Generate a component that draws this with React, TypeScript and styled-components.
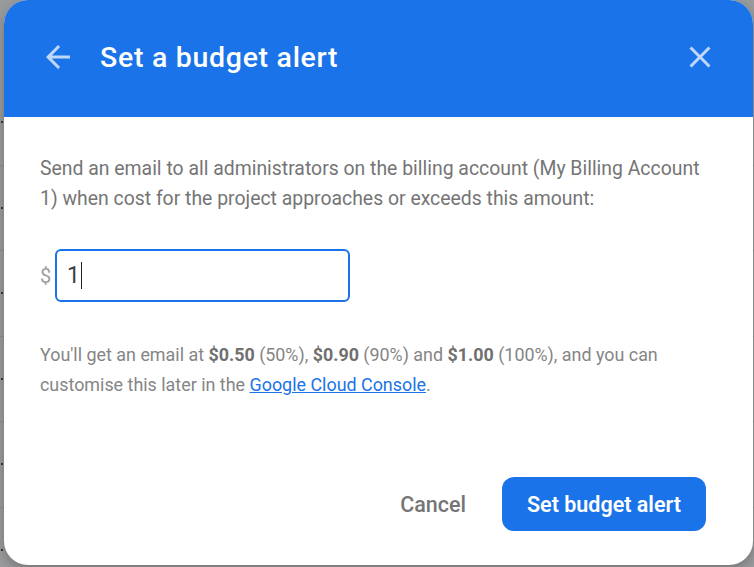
import React from 'react';
import styled, { createGlobalStyle } from 'styled-components';

const GlobalStyle = createGlobalStyle`
  html, body {
    margin: 0;
    padding: 0;
    background: #9a9b9d;
    font-family: Roboto, 'Liberation Sans', Arial, sans-serif;
  }
`;

const Page = styled.div`
  position: relative;
  width: 754px;
  height: 567px;
  overflow: hidden;
  background: #9a9b9d;
`;

const BackRows = styled.div`
  display: flex;
  flex-direction: column;
  padding-top: 80px;
`;

const BackRow = styled.div`
  height: 85.5px;
  box-sizing: border-box;
  border-bottom: 1px solid #8e8f91;
  display: flex;
  align-items: center;
  padding-left: 1px;
  .dot {
    width: 2px;
    height: 2px;
    background: #2f3a44;
  }
`;

const Dialog = styled.div`
  position: absolute;
  left: 4px;
  top: 0;
  width: 749px;
  height: 565px;
  border-radius: 24px;
  overflow: hidden;
  background: #fff;
  display: flex;
  flex-direction: column;
  box-shadow: 0 4px 12px rgba(0, 0, 0, 0.25);
`;

const Header = styled.div`
  height: 117px;
  box-sizing: border-box;
  flex-shrink: 0;
  background: #1a73e8;
  display: flex;
  align-items: center;
  padding: 0 35px 3px 36px;
`;

const IconButton = styled.button`
  border: 0;
  background: transparent;
  padding: 0;
  width: 36px;
  height: 36px;
  display: flex;
  align-items: center;
  justify-content: center;
  cursor: pointer;
  svg {
    fill: rgba(255, 255, 255, 0.72);
  }
`;

const Title = styled.h1`
  margin: 0 0 0 24px;
  flex: 1;
  color: #fff;
  font-size: 28.5px;
  font-weight: 500;
  letter-spacing: 0.7px;
`;

const Body = styled.div`
  flex: 1;
  display: flex;
  flex-direction: column;
  padding: 37px 36px 34px;
`;

const Lead = styled.p`
  margin: 0;
  font-size: 19.4px;
  line-height: 30px;
  color: #757575;
`;

const AmountRow = styled.div`
  display: flex;
  align-items: center;
  margin-top: 35px;
  gap: 4px;
`;

const Currency = styled.span`
  font-size: 20px;
  color: #9e9e9e;
  width: 11px;
`;

const AmountField = styled.div`
  width: 295px;
  height: 53px;
  box-sizing: border-box;
  border: 2px solid #1a73e8;
  border-radius: 6px;
  display: flex;
  align-items: center;
  padding-left: 10px;
  font-size: 23px;
  color: #3c4043;
`;

const Caret = styled.span`
  display: inline-block;
  width: 1px;
  height: 27px;
  margin-left: 1px;
  background: #202124;
`;

const Note = styled.p`
  margin: 38px 0 0;
  font-size: 17.9px;
  line-height: 30px;
  color: #858585;
  b {
    font-weight: 700;
    color: #707070;
  }
  a {
    color: #1a73e8;
    text-decoration: underline;
  }
`;

const Footer = styled.div`
  margin-top: auto;
  display: flex;
  justify-content: flex-end;
  align-items: center;
  gap: 20px;
  padding-right: 11px;
`;

const Button = styled.button<{ $primary?: boolean }>`
  font-family: Roboto, 'Liberation Sans', Arial, sans-serif;
  font-size: 21.5px;
  font-weight: ${(p) => (p.$primary ? 600 : 500)};
  height: 54px;
  border: 0;
  border-radius: 12px;
  padding: 0 ${(p) => (p.$primary ? '25px' : '16px')};
  background: ${(p) => (p.$primary ? '#1a73e8' : 'transparent')};
  color: ${(p) => (p.$primary ? '#fff' : '#757575')};
  cursor: pointer;
`;

const ArrowBack = () => (
  <svg width='36' height='36' viewBox='0 0 24 24'>
    <path d='M20 11H7.83l5.59-5.59L12 4l-8 8 8 8 1.41-1.41L7.83 13H20v-2z' />
  </svg>
);

const CloseIcon = () => (
  <svg width='36' height='36' viewBox='0 0 24 24'>
    <path d='M19 6.41L17.59 5 12 10.59 6.41 5 5 6.41 10.59 12 5 17.59 6.41 19 12 13.41 17.59 19 19 17.59 13.41 12z' />
  </svg>
);

const App = () => {
  const rows = [0, 1, 2, 3, 4, 5, 6];

  return (
    <Page>
      <GlobalStyle />
      <BackRows>
        {rows.map((r) => (
          <BackRow key={r}>
            <span className='dot' />
          </BackRow>
        ))}
      </BackRows>

      <Dialog>
        <Header>
          <IconButton aria-label='Back'>
            <ArrowBack />
          </IconButton>
          <Title>Set a budget alert</Title>
          <IconButton aria-label='Close'>
            <CloseIcon />
          </IconButton>
        </Header>

        <Body>
          <Lead>
            Send an email to all administrators on the billing account (My
            Billing Account 1) when cost for the project approaches or exceeds
            this amount:
          </Lead>

          <AmountRow>
            <Currency>$</Currency>
            <AmountField>
              1<Caret />
            </AmountField>
          </AmountRow>

          <Note>
            You'll get an email at <b>$0.50</b> (50%), <b>$0.90</b> (90%) and{' '}
            <b>$1.00</b> (100%), and you can customise this later in the{' '}
            <a href='#'>Google Cloud Console</a>.
          </Note>

          <Footer>
            <Button>Cancel</Button>
            <Button $primary>Set budget alert</Button>
          </Footer>
        </Body>
      </Dialog>
    </Page>
  );
};

export default App;
